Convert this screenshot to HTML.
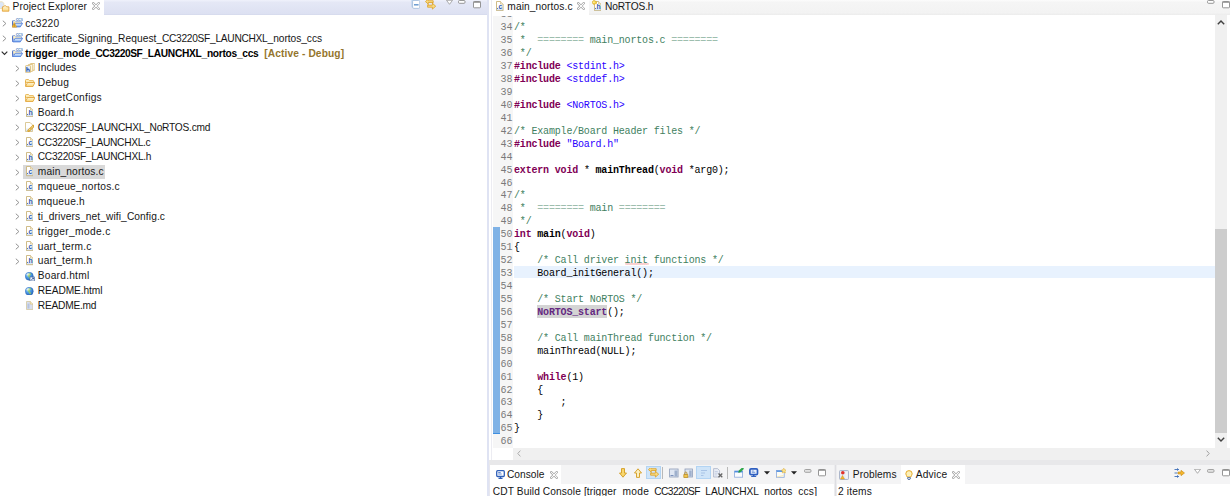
<!DOCTYPE html><html><head><meta charset="utf-8"><title>CCS</title><style>
*{box-sizing:border-box}
html,body{margin:0;padding:0}
body{width:1230px;height:496px;position:relative;overflow:hidden;background:#fff;font-family:"Liberation Sans", sans-serif;font-size:10px;color:#1a1a1a}
.abs,.ic,.tt,.sel,.ln{position:absolute}
.ic{line-height:0;display:block}
.ic svg{display:block}
.tt{white-space:pre;font-size:10.2px;color:#161616}
.tt.b{font-weight:bold;color:#000}
.tt.act{color:#94752c}
.sel{background:#d9d9d9}
#pe-head{left:104px;top:0;width:384px;height:14.6px;background:linear-gradient(#eef0fa 0,#eceffa 8%,#e5e8f6 12%,#dde1f2 90%,#d4d9ec 100%)}
#pe-border{left:487.4px;top:0;width:1.5px;height:496px;background:#dfe3f3}
#ed-left{left:491px;top:0;width:1px;height:465px;background:#ececf2}
#ed-tabs{left:492px;top:0;width:738px;height:14.6px;background:linear-gradient(#fbfbfb 0,#fafafa 8%,#f5f5f5 12%,#f3f3f3 85%,#ececec 100%)}
#ed-tab1{left:492px;top:0;width:97px;height:14.6px;background:#fff}
#editor{left:492px;top:15.7px;width:722.5px;height:431.9px;overflow:hidden;background:#fff}
#gut{left:.7px;top:0;width:20px;height:433px;background:#f6f6f6}
#bluebar{left:1px;top:211.4px;width:7px;height:206.6px;background:#7fb2e6;border-bottom:1px solid #3f8fe0}
.ln{left:0;width:740px;height:12.94px;line-height:12.94px;font-family:"Liberation Mono", monospace;font-size:10px;letter-spacing:-0.18px;white-space:pre;color:#000}
.ln .no{position:absolute;left:8.6px;top:0;color:#7a7a7a}
.ln .cd{position:absolute;left:22px;top:0;right:0}
.eq{opacity:.5}
.k{color:#7f0055}
.c{color:#3f7f5f}
.s{color:#2a00ff}
.fn{color:#642880}
#vsb{left:1214.5px;top:14.6px;width:12.6px;height:433px;background:#f0f0f0}
#vthumb{left:1214.5px;top:228.8px;width:12.6px;height:204.2px;background:#cdcdcd}
#hsb{left:512.6px;top:447.6px;width:717.4px;height:12.6px;background:#f0f0f0}
#sep{left:488.5px;top:460.2px;width:741.5px;height:5px;background:#e8e8ea}
#con-head{left:489px;top:465px;width:344.5px;height:18.7px;background:#f4f4f5}
#con-tab{left:489px;top:465px;width:72px;height:18.7px;background:#fff}
#adv-head{left:837px;top:465px;width:393px;height:18.7px;background:#f4f4f5}
#adv-tab{left:900.9px;top:465px;width:63.7px;height:18.7px;background:#fff}
#gap2{left:833.5px;top:465px;width:3.5px;height:31px;background:linear-gradient(90deg,#ececee 0,#ececee 40%,#dedee2 50%,#dedee2 75%,#ececee 80%)}
.lbl{position:absolute;white-space:pre}
.hl{position:absolute;background:#cfe4f8;border:1px solid #b3d4f3}
.vsep{position:absolute;width:1px;background:#b8b8b8}
</style></head><body>
<svg width="0" height="0" style="position:absolute"><defs><linearGradient id="gflap" x1="0" y1="0" x2="0" y2="1"><stop offset="0" stop-color="#e6f0fd"/><stop offset=".5" stop-color="#b4d2f8"/><stop offset="1" stop-color="#6c9cea"/></linearGradient><linearGradient id="gfold" x1="0" y1="0" x2="0" y2="1"><stop offset="0" stop-color="#fff7dc"/><stop offset="1" stop-color="#fad67a"/></linearGradient><linearGradient id="gpage" x1="0" y1="0" x2="0" y2="1"><stop offset="0" stop-color="#ffffff"/><stop offset=".55" stop-color="#ffffff"/><stop offset="1" stop-color="#c7dcf6"/></linearGradient><radialGradient id="gglobe" cx=".35" cy=".3" r=".8"><stop offset="0" stop-color="#d6ecff"/><stop offset=".35" stop-color="#58a6ee"/><stop offset="1" stop-color="#1f5fb4"/></radialGradient></defs></svg>
<div class="abs" id="pe-head"></div><div class="abs" id="pe-border"></div>
<span class="ic" style="left:0px;top:.5px"><svg width="10" height="11" viewBox="0 0 10 11"><path d="M-1 .8h3.400l1.400 1.500v5.200H-1z" fill="#dbe6f8" stroke="#ecdcae" stroke-width=".8"/><path d="M2.400 5.800h1l.9-1h1.500l.9 1h2.200v4.400H2.400z" fill="url(#gfold)" stroke="#df9c34" stroke-width=".8"/></svg></span>
<span class="tt" style="letter-spacing:0.126px;left:12.5px;top:0;height:13px;line-height:13px">Project Explorer</span>
<span class="ic" style="left:92px;top:1.900px"><svg width="8" height="8" viewBox="0 0 8 8"><path d="M1.300 1.300l5.400 5.400M6.700 1.300L1.300 6.700" stroke="#979797" stroke-width="2.300" stroke-linecap="square"/><path d="M1.300 1.300l5.400 5.400M6.700 1.300L1.300 6.700" stroke="#fff" stroke-width="1.100" stroke-linecap="square"/></svg></span>
<span class="ic" style="left:411px;top:-0.2px"><svg width="9.4" height="9.4" viewBox="0 0 9.4 9.4" ><rect x=".4" y="-.6" width="7" height="8" rx="1" fill="#b9d3ee"/><rect x="1.600" y=".4" width="7.200" height="8" rx="1.200" fill="#fff" stroke="#a6bfdc" stroke-width=".9"/><path d="M3 4.800h4.600" stroke="#6a9bd0" stroke-width="1.500"/></svg></span><span class="ic" style="left:424.6px;top:0px"><svg width="11.2" height="10" viewBox="0 0 11.2 10" ><path d="M.5 1.600L3.200-.9V.700h5V2.500h-5V4z" fill="#f9dc80" stroke="#dd9f22" stroke-width=".8" stroke-linejoin="round"/><path d="M10.700 6.200L7.400 3.300v1.900H2.600v2h4.800v1.900z" fill="#f9dc80" stroke="#dd9f22" stroke-width=".8" stroke-linejoin="round"/><path d="M7.700 2.500v1.200M3.100 5.200V3.900" stroke="#dd9f22" stroke-width=".9"/></svg></span><span class="ic" style="left:445.5px;top:0px"><svg width="7" height="5" viewBox="0 0 7 5" ><path d="M.5.300h6L3.500 4.300z" fill="#fff" stroke="#8e8e8e" stroke-width=".7"/></svg></span><span class="ic" style="left:458px;top:-0.2px"><svg width="8" height="4" viewBox="0 0 8 4" ><rect x=".5" y=".5" width="6.500" height="2.800" rx="1" fill="#fff" stroke="#8c8c8c" stroke-width=".9"/></svg></span><span class="ic" style="left:472.7px;top:0.7px"><svg width="8" height="8" viewBox="0 0 8 8" ><rect x=".5" y=".5" width="7" height="6.300" rx=".8" fill="#fff" stroke="#8a8a8a" stroke-width=".9"/><path d="M.5 1.200h7" stroke="#8a8a8a" stroke-width="1.100"/></svg></span>
<span class="ic" style="left:2.2px;top:20.45px"><svg width="5" height="7" viewBox="0 0 5 7"><path d="M.8.700L3.900 3.500.8 6.300" fill="none" stroke="#909090" stroke-width="1"/></svg></span>
<span class="ic" style="left:11.8px;top:17.30px"><svg width="11" height="10.5" viewBox="0 0 11 10.5"><text x="3.700" y="3.500" font-family="Liberation Sans, sans-serif" font-weight="bold" font-size="4.800" fill="#6a98cc" letter-spacing="-.25">ccs</text><path d="M.6 3.600h2.400l.9 1.100h5.600v2.600H.6z" fill="#fdf1c6" stroke="#6a92de" stroke-width=".7"/><path d="M.6 4.200v5.600" stroke="#3f63c0" stroke-width=".9"/><path d="M.9 9.900l2.300-3.600h7.400l-2.300 3.600z" fill="url(#gflap)" stroke="#4a78d8" stroke-width=".8"/><path d="M2.300 5.600L4.700 10.200H-.1z" fill="#f3b93a" stroke="#d39420" stroke-width=".5"/><path d="M2.300 7.200v1.500M2.300 9.200v.5" stroke="#8a5a00" stroke-width=".6"/></svg></span>
<span class="tt" style="letter-spacing:0.207px;left:25.2px;top:16.93px;height:14.84px;line-height:14.84px">cc3220</span>
<span class="ic" style="left:2.2px;top:35.29px"><svg width="5" height="7" viewBox="0 0 5 7"><path d="M.8.700L3.900 3.500.8 6.300" fill="none" stroke="#909090" stroke-width="1"/></svg></span>
<span class="ic" style="left:11.8px;top:32.14px"><svg width="11" height="10.5" viewBox="0 0 11 10.5"><text x="3.700" y="3.500" font-family="Liberation Sans, sans-serif" font-weight="bold" font-size="4.800" fill="#6a98cc" letter-spacing="-.25">ccs</text><path d="M.6 3.600h2.400l.9 1.100h5.600v2.600H.6z" fill="#fdf1c6" stroke="#6a92de" stroke-width=".7"/><path d="M.6 4.200v5.600" stroke="#3f63c0" stroke-width=".9"/><path d="M.9 9.900l2.300-3.600h7.400l-2.300 3.600z" fill="url(#gflap)" stroke="#4a78d8" stroke-width=".8"/></svg></span>
<span class="tt" style="left:25.2px;top:31.77px;height:14.84px;line-height:14.84px"><span style="letter-spacing:0.081px;">Certificate_Signing_Request</span><span style="letter-spacing:-0.282px;">_CC3220SF_LAUNCHXL</span><span style="letter-spacing:-0.040px;">_nortos_ccs</span></span>
<span class="ic" style="left:1.0000000000000002px;top:51.23px"><svg width="7" height="4.4" viewBox="0 0 7 4.4"><path d="M.7.700L3.500 3.500 6.300.700" fill="none" stroke="#2c2c2c" stroke-width="1.150"/></svg></span>
<span class="ic" style="left:11.8px;top:46.98px"><svg width="11" height="10.5" viewBox="0 0 11 10.5"><text x="3.700" y="3.500" font-family="Liberation Sans, sans-serif" font-weight="bold" font-size="4.800" fill="#6a98cc" letter-spacing="-.25">ccs</text><path d="M.6 3.600h2.400l.9 1.100h5.600v2.600H.6z" fill="#fdf1c6" stroke="#6a92de" stroke-width=".7"/><path d="M.6 4.200v5.600" stroke="#3f63c0" stroke-width=".9"/><path d="M.9 9.900l2.300-3.600h7.400l-2.300 3.600z" fill="url(#gflap)" stroke="#4a78d8" stroke-width=".8"/></svg></span>
<span class="tt b" style="left:25.2px;top:46.61px;height:14.84px;line-height:14.84px"><span style="letter-spacing:-0.009px;">trigger_mode</span><span style="letter-spacing:-0.440px;">_CC3220SF</span><span style="letter-spacing:-0.276px;">_LAUNCHXL_nortos_ccs</span></span>
<span class="tt b act" style="letter-spacing:0.118px;left:264.2px;top:46.61px;height:14.84px;line-height:14.84px">[Active - Debug]</span>
<span class="ic" style="left:14.8px;top:64.97px"><svg width="5" height="7" viewBox="0 0 5 7"><path d="M.8.700L3.900 3.500.8 6.300" fill="none" stroke="#909090" stroke-width="1"/></svg></span>
<span class="ic" style="left:24.5px;top:62.77px"><svg width="10.6" height="10.2" viewBox="0 0 10.6 10.2"><rect x="5.300" y=".5" width="4.600" height="6.800" rx=".8" fill="#fbf6e4" stroke="#d9b86a" stroke-width=".8"/><rect x="3.200" y="1.400" width="4.600" height="7" rx=".8" fill="#fbf6e4" stroke="#d9b86a" stroke-width=".8"/><rect x=".5" y="2.600" width="5" height="7.100" rx=".8" fill="#e8f0fb" stroke="#d9b86a" stroke-width=".8"/><path d="M1.900 4v4.800M1.900 7c.6-1.300 2.300-1.200 2.300.2v1.600" stroke="#2f5fb8" stroke-width="1.200" fill="none"/></svg></span>
<span class="tt" style="letter-spacing:0.081px;left:37.8px;top:61.45px;height:14.84px;line-height:14.84px">Includes</span>
<span class="ic" style="left:14.8px;top:79.81px"><svg width="5" height="7" viewBox="0 0 5 7"><path d="M.8.700L3.900 3.500.8 6.300" fill="none" stroke="#909090" stroke-width="1"/></svg></span>
<span class="ic" style="left:24.6px;top:79.31px"><svg width="10.4" height="8" viewBox="0 0 10.4 8"><path d="M.5 1.200c0-.5.300-.7.700-.7h2.300l1 1.100h3.600c.4 0 .6.300.6.600v1.200H.5z" fill="#fdf0c0" stroke="#e3a93c" stroke-width=".8"/><path d="M.5 2v5.200" stroke="#e3a93c" stroke-width=".8"/><path d="M.6 7.500l1.900-4h7.400l-1.900 4z" fill="url(#gfold)" stroke="#e0a030" stroke-width=".8"/></svg></span>
<span class="tt" style="letter-spacing:0.254px;left:37.8px;top:76.29px;height:14.84px;line-height:14.84px">Debug</span>
<span class="ic" style="left:14.8px;top:94.65px"><svg width="5" height="7" viewBox="0 0 5 7"><path d="M.8.700L3.900 3.500.8 6.300" fill="none" stroke="#909090" stroke-width="1"/></svg></span>
<span class="ic" style="left:24.6px;top:94.15px"><svg width="10.4" height="8" viewBox="0 0 10.4 8"><path d="M.5 1.200c0-.5.300-.7.700-.7h2.300l1 1.100h3.600c.4 0 .6.300.6.600v1.200H.5z" fill="#fdf0c0" stroke="#e3a93c" stroke-width=".8"/><path d="M.5 2v5.200" stroke="#e3a93c" stroke-width=".8"/><path d="M.6 7.500l1.900-4h7.400l-1.900 4z" fill="url(#gfold)" stroke="#e0a030" stroke-width=".8"/></svg></span>
<span class="tt" style="letter-spacing:0.277px;left:37.8px;top:91.13px;height:14.84px;line-height:14.84px">targetConfigs</span>
<span class="ic" style="left:14.8px;top:109.49px"><svg width="5" height="7" viewBox="0 0 5 7"><path d="M.8.700L3.900 3.500.8 6.300" fill="none" stroke="#909090" stroke-width="1"/></svg></span>
<span class="ic" style="left:25.9px;top:107.09px"><svg width="7.6" height="10.2" viewBox="0 0 7.6 10.2"><path d="M.5.500h4l2.600 2.600v6.600H.5z" fill="url(#gpage)" stroke="#cbb47a" stroke-width=".9"/><path d="M4.500.500v2.600h2.600" fill="#f6ecd0" stroke="#cbb47a" stroke-width=".6"/><rect x="1" y="7.100" width=".9" height=".9" fill="#2d5cb5"/><text x="4.500" y="8.100" font-family="Liberation Sans, sans-serif" font-weight="bold" font-size="6.800" fill="#2a58b0" text-anchor="middle">h</text></svg></span>
<span class="tt" style="letter-spacing:0.073px;left:37.8px;top:105.97px;height:14.84px;line-height:14.84px">Board.h</span>
<span class="ic" style="left:14.8px;top:124.33px"><svg width="5" height="7" viewBox="0 0 5 7"><path d="M.8.700L3.900 3.500.8 6.300" fill="none" stroke="#909090" stroke-width="1"/></svg></span>
<span class="ic" style="left:24.5px;top:122.13px"><svg width="9.6" height="10" viewBox="0 0 9.6 10"><path d="M.5.500h4.600l2.400 2.400v6.600H.5z" fill="url(#gpage)" stroke="#d8c48c" stroke-width=".9"/><path d="M3.600 8.700l4.800-4.600" stroke="#d9a532" stroke-width="2.600" stroke-linecap="round"/><path d="M4.300 8l1-1M6.700 5.700l1-1" stroke="#fff3c8" stroke-width=".9" stroke-linecap="round"/></svg></span>
<span class="tt" style="letter-spacing:-0.240px;left:37.8px;top:120.81px;height:14.84px;line-height:14.84px">CC3220SF_LAUNCHXL_NoRTOS.cmd</span>
<span class="ic" style="left:14.8px;top:139.17px"><svg width="5" height="7" viewBox="0 0 5 7"><path d="M.8.700L3.900 3.500.8 6.300" fill="none" stroke="#909090" stroke-width="1"/></svg></span>
<span class="ic" style="left:25.9px;top:136.77px"><svg width="7.6" height="10.2" viewBox="0 0 7.6 10.2"><path d="M.5.500h4l2.600 2.600v6.600H.5z" fill="url(#gpage)" stroke="#cbb47a" stroke-width=".9"/><path d="M4.500.500v2.600h2.600" fill="#f6ecd0" stroke="#cbb47a" stroke-width=".6"/><rect x="1" y="7.100" width=".9" height=".9" fill="#2d5cb5"/><text x="4.500" y="8.100" font-family="Liberation Sans, sans-serif" font-weight="bold" font-size="6.800" fill="#2a58b0" text-anchor="middle">c</text></svg></span>
<span class="tt" style="letter-spacing:-0.302px;left:37.8px;top:135.65px;height:14.84px;line-height:14.84px">CC3220SF_LAUNCHXL.c</span>
<span class="ic" style="left:14.8px;top:154.01px"><svg width="5" height="7" viewBox="0 0 5 7"><path d="M.8.700L3.900 3.500.8 6.300" fill="none" stroke="#909090" stroke-width="1"/></svg></span>
<span class="ic" style="left:25.9px;top:151.61px"><svg width="7.6" height="10.2" viewBox="0 0 7.6 10.2"><path d="M.5.500h4l2.600 2.600v6.600H.5z" fill="url(#gpage)" stroke="#cbb47a" stroke-width=".9"/><path d="M4.500.500v2.600h2.600" fill="#f6ecd0" stroke="#cbb47a" stroke-width=".6"/><rect x="1" y="7.100" width=".9" height=".9" fill="#2d5cb5"/><text x="4.500" y="8.100" font-family="Liberation Sans, sans-serif" font-weight="bold" font-size="6.800" fill="#2a58b0" text-anchor="middle">h</text></svg></span>
<span class="tt" style="letter-spacing:-0.291px;left:37.8px;top:150.49px;height:14.84px;line-height:14.84px">CC3220SF_LAUNCHXL.h</span>
<div class="sel" style="left:23px;top:164.53px;width:82.0px;height:14.700px"></div>
<span class="ic" style="left:14.8px;top:168.85px"><svg width="5" height="7" viewBox="0 0 5 7"><path d="M.8.700L3.900 3.500.8 6.300" fill="none" stroke="#909090" stroke-width="1"/></svg></span>
<span class="ic" style="left:25.9px;top:166.45px"><svg width="7.6" height="10.2" viewBox="0 0 7.6 10.2"><path d="M.5.500h4l2.600 2.600v6.600H.5z" fill="url(#gpage)" stroke="#cbb47a" stroke-width=".9"/><path d="M4.500.500v2.600h2.600" fill="#f6ecd0" stroke="#cbb47a" stroke-width=".6"/><rect x="1" y="7.100" width=".9" height=".9" fill="#2d5cb5"/><text x="4.500" y="8.100" font-family="Liberation Sans, sans-serif" font-weight="bold" font-size="6.800" fill="#2a58b0" text-anchor="middle">c</text></svg></span>
<span class="tt" style="letter-spacing:0.146px;left:37.8px;top:165.33px;height:14.84px;line-height:14.84px">main_nortos.c</span>
<span class="ic" style="left:14.8px;top:183.69px"><svg width="5" height="7" viewBox="0 0 5 7"><path d="M.8.700L3.900 3.500.8 6.300" fill="none" stroke="#909090" stroke-width="1"/></svg></span>
<span class="ic" style="left:25.9px;top:181.29px"><svg width="7.6" height="10.2" viewBox="0 0 7.6 10.2"><path d="M.5.500h4l2.600 2.600v6.600H.5z" fill="url(#gpage)" stroke="#cbb47a" stroke-width=".9"/><path d="M4.500.500v2.600h2.600" fill="#f6ecd0" stroke="#cbb47a" stroke-width=".6"/><rect x="1" y="7.100" width=".9" height=".9" fill="#2d5cb5"/><text x="4.500" y="8.100" font-family="Liberation Sans, sans-serif" font-weight="bold" font-size="6.800" fill="#2a58b0" text-anchor="middle">c</text></svg></span>
<span class="tt" style="letter-spacing:0.224px;left:37.8px;top:180.17px;height:14.84px;line-height:14.84px">mqueue_nortos.c</span>
<span class="ic" style="left:14.8px;top:198.53px"><svg width="5" height="7" viewBox="0 0 5 7"><path d="M.8.700L3.900 3.500.8 6.300" fill="none" stroke="#909090" stroke-width="1"/></svg></span>
<span class="ic" style="left:25.9px;top:196.13px"><svg width="7.6" height="10.2" viewBox="0 0 7.6 10.2"><path d="M.5.500h4l2.600 2.600v6.600H.5z" fill="url(#gpage)" stroke="#cbb47a" stroke-width=".9"/><path d="M4.500.500v2.600h2.600" fill="#f6ecd0" stroke="#cbb47a" stroke-width=".6"/><rect x="1" y="7.100" width=".9" height=".9" fill="#2d5cb5"/><text x="4.500" y="8.100" font-family="Liberation Sans, sans-serif" font-weight="bold" font-size="6.800" fill="#2a58b0" text-anchor="middle">h</text></svg></span>
<span class="tt" style="letter-spacing:0.236px;left:37.8px;top:195.01px;height:14.84px;line-height:14.84px">mqueue.h</span>
<span class="ic" style="left:14.8px;top:213.37px"><svg width="5" height="7" viewBox="0 0 5 7"><path d="M.8.700L3.900 3.500.8 6.300" fill="none" stroke="#909090" stroke-width="1"/></svg></span>
<span class="ic" style="left:25.9px;top:210.97px"><svg width="7.6" height="10.2" viewBox="0 0 7.6 10.2"><path d="M.5.500h4l2.600 2.600v6.600H.5z" fill="url(#gpage)" stroke="#cbb47a" stroke-width=".9"/><path d="M4.500.500v2.600h2.600" fill="#f6ecd0" stroke="#cbb47a" stroke-width=".6"/><rect x="1" y="7.100" width=".9" height=".9" fill="#2d5cb5"/><text x="4.500" y="8.100" font-family="Liberation Sans, sans-serif" font-weight="bold" font-size="6.800" fill="#2a58b0" text-anchor="middle">c</text></svg></span>
<span class="tt" style="letter-spacing:0.094px;left:37.8px;top:209.85px;height:14.84px;line-height:14.84px">ti_drivers_net_wifi_Config.c</span>
<span class="ic" style="left:14.8px;top:228.21px"><svg width="5" height="7" viewBox="0 0 5 7"><path d="M.8.700L3.900 3.500.8 6.300" fill="none" stroke="#909090" stroke-width="1"/></svg></span>
<span class="ic" style="left:25.9px;top:225.81px"><svg width="7.6" height="10.2" viewBox="0 0 7.6 10.2"><path d="M.5.500h4l2.600 2.600v6.600H.5z" fill="url(#gpage)" stroke="#cbb47a" stroke-width=".9"/><path d="M4.500.500v2.600h2.600" fill="#f6ecd0" stroke="#cbb47a" stroke-width=".6"/><rect x="1" y="7.100" width=".9" height=".9" fill="#2d5cb5"/><text x="4.500" y="8.100" font-family="Liberation Sans, sans-serif" font-weight="bold" font-size="6.800" fill="#2a58b0" text-anchor="middle">c</text></svg></span>
<span class="tt" style="letter-spacing:0.346px;left:37.8px;top:224.69px;height:14.84px;line-height:14.84px">trigger_mode.c</span>
<span class="ic" style="left:14.8px;top:243.05px"><svg width="5" height="7" viewBox="0 0 5 7"><path d="M.8.700L3.900 3.500.8 6.300" fill="none" stroke="#909090" stroke-width="1"/></svg></span>
<span class="ic" style="left:25.9px;top:240.65px"><svg width="7.6" height="10.2" viewBox="0 0 7.6 10.2"><path d="M.5.500h4l2.600 2.600v6.600H.5z" fill="url(#gpage)" stroke="#cbb47a" stroke-width=".9"/><path d="M4.500.500v2.600h2.600" fill="#f6ecd0" stroke="#cbb47a" stroke-width=".6"/><rect x="1" y="7.100" width=".9" height=".9" fill="#2d5cb5"/><text x="4.500" y="8.100" font-family="Liberation Sans, sans-serif" font-weight="bold" font-size="6.800" fill="#2a58b0" text-anchor="middle">c</text></svg></span>
<span class="tt" style="letter-spacing:0.197px;left:37.8px;top:239.53px;height:14.84px;line-height:14.84px">uart_term.c</span>
<span class="ic" style="left:14.8px;top:257.89px"><svg width="5" height="7" viewBox="0 0 5 7"><path d="M.8.700L3.900 3.500.8 6.300" fill="none" stroke="#909090" stroke-width="1"/></svg></span>
<span class="ic" style="left:25.9px;top:255.49px"><svg width="7.6" height="10.2" viewBox="0 0 7.6 10.2"><path d="M.5.500h4l2.600 2.600v6.600H.5z" fill="url(#gpage)" stroke="#cbb47a" stroke-width=".9"/><path d="M4.500.500v2.600h2.600" fill="#f6ecd0" stroke="#cbb47a" stroke-width=".6"/><rect x="1" y="7.100" width=".9" height=".9" fill="#2d5cb5"/><text x="4.500" y="8.100" font-family="Liberation Sans, sans-serif" font-weight="bold" font-size="6.800" fill="#2a58b0" text-anchor="middle">h</text></svg></span>
<span class="tt" style="letter-spacing:0.219px;left:37.8px;top:254.37px;height:14.84px;line-height:14.84px">uart_term.h</span>
<span class="ic" style="left:25.2px;top:271.68px"><svg width="10" height="9.4" viewBox="0 0 10 9.4"><circle cx="4.300" cy="4.300" r="4" fill="url(#gglobe)" stroke="#2f68b8" stroke-width=".5"/><path d="M3.600 1.600c1-.5 2.200-.2 2.600.5-.2.900-1 1.100-1.500 1.700-.5.700.3 1.300.9 1.600.6.400.3 1.400-.4 2-.6-.3-.8-1-1.100-1.700-.4-.8-1.400-1-1.500-1.900-.1-.9.300-1.700 1-2.200z" fill="#9ccf5a" opacity=".9"/><ellipse cx="3" cy="2.400" rx="1.700" ry="1.100" fill="#fff" opacity=".55"/><rect x="5" y="5" width="4.600" height="4" fill="#f4f7fc" stroke="#4c6a9c" stroke-width=".7"/><path d="M6.200 8l2.200-1.900M7.200 6h1.300v1.300" stroke="#234a98" stroke-width=".8" fill="none"/></svg></span>
<span class="tt" style="letter-spacing:0.233px;left:37.8px;top:269.21px;height:14.84px;line-height:14.84px">Board.html</span>
<span class="ic" style="left:25.2px;top:286.57px"><svg width="8.6" height="8.6" viewBox="0 0 8.6 8.6"><circle cx="4.300" cy="4.300" r="4" fill="url(#gglobe)" stroke="#2f68b8" stroke-width=".5"/><path d="M3.600 1.600c1-.5 2.200-.2 2.600.5-.2.900-1 1.100-1.500 1.700-.5.700.3 1.300.9 1.600.6.400.3 1.400-.4 2-.6-.3-.8-1-1.100-1.700-.4-.8-1.400-1-1.500-1.900-.1-.9.300-1.700 1-2.200z" fill="#9ccf5a" opacity=".9"/><ellipse cx="3" cy="2.400" rx="1.700" ry="1.100" fill="#fff" opacity=".55"/></svg></span>
<span class="tt" style="letter-spacing:-0.097px;left:37.8px;top:284.05px;height:14.84px;line-height:14.84px">README.html</span>
<span class="ic" style="left:26px;top:301.21px"><svg width="7.4" height="9" viewBox="0 0 7.4 9"><path d="M.5.500h3.800l2.600 2.600v5.400H.5z" fill="#d8dff0" stroke="#d2c69e" stroke-width=".8"/><path d="M4.300.500v2.600h2.600" fill="#f7ecc8" stroke="#dcc070" stroke-width=".6"/><path d="M1.500 2.600h2v4.900h-2z" fill="#b6c3de"/></svg></span>
<span class="tt" style="letter-spacing:-0.231px;left:37.8px;top:298.89px;height:14.84px;line-height:14.84px">README.md</span>
<div class="abs" id="ed-left"></div><div class="abs" id="ed-tabs"></div><div class="abs" id="ed-tab1"></div>
<span class="ic" style="left:496px;top:.9px"><svg width="7.6" height="10.2" viewBox="0 0 7.6 10.2"><path d="M.5.500h4l2.600 2.600v6.600H.5z" fill="url(#gpage)" stroke="#cbb47a" stroke-width=".9"/><path d="M4.500.500v2.600h2.600" fill="#f6ecd0" stroke="#cbb47a" stroke-width=".6"/><rect x="1" y="7.100" width=".9" height=".9" fill="#2d5cb5"/><text x="4.500" y="8.100" font-family="Liberation Sans, sans-serif" font-weight="bold" font-size="6.800" fill="#2a58b0" text-anchor="middle">c</text></svg></span>
<span class="tt" style="letter-spacing:0.100px;left:507.3px;top:0;height:13.4px;line-height:13.4px">main_nortos.c</span>
<span class="ic" style="left:577.400px;top:1.900px"><svg width="8" height="8" viewBox="0 0 8 8"><path d="M1.300 1.300l5.400 5.400M6.700 1.300L1.300 6.700" stroke="#979797" stroke-width="2.300" stroke-linecap="square"/><path d="M1.300 1.300l5.400 5.400M6.700 1.300L1.300 6.700" stroke="#fff" stroke-width="1.100" stroke-linecap="square"/></svg></span>
<span class="ic" style="left:593.600px;top:.9px"><svg width="7.6" height="10.2" viewBox="0 0 7.6 10.2"><path d="M.5.500h4l2.600 2.600v6.600H.5z" fill="url(#gpage)" stroke="#cbb47a" stroke-width=".9"/><path d="M4.500.500v2.600h2.600" fill="#f6ecd0" stroke="#cbb47a" stroke-width=".6"/><rect x="1" y="7.100" width=".9" height=".9" fill="#2d5cb5"/><text x="4.500" y="8.100" font-family="Liberation Sans, sans-serif" font-weight="bold" font-size="6.800" fill="#2a58b0" text-anchor="middle">h</text></svg></span><span class="ic" style="left:592px;top:.4px"><svg width="5.400" height="5" viewBox="0 0 5.400 5"><path d="M.4 2.200c0-1.500 1.400-2 2.400-1.500l2 1.400c.5.500.2 1.300-.5 1.300l-2 .9C1.200 4.600.4 3.600.4 2.200z" fill="#f3d24a" stroke="#d9a520" stroke-width=".6"/><circle cx="1.900" cy="2.300" r=".7" fill="#fff6c0"/></svg></span>
<span class="tt" style="letter-spacing:-0.132px;left:605px;top:0;height:13.4px;line-height:13.4px">NoRTOS.h</span>
<div class="abs" id="editor"><div class="abs" id="gut"></div><div class="abs" id="bluebar"></div><div id="lines" style="position:absolute;left:0;top:-15.7px"><div class="abs" style="left:22px;top:266.46px;width:720px;height:12px;background:#e8f2fe"></div>
<div class="abs" style="left:45.2px;top:305.18px;width:69.6px;height:12.4px;background:#d4d4d4"></div>
<span class="ic" style="left:133.4px;top:263.42px"><svg width="23.6" height="2.2" viewBox="0 0 23.6 2.2"><path d="M0 1.6L1 .4L2 1.600L3 .4L4 1.600L5 .4L6 1.600L7 .4L8 1.600L9 .4L10 1.600L11 .4L12 1.600L13 .4L14 1.600L15 .4L16 1.600L17 .4L18 1.600L19 .4L20 1.600L21 .4L22 1.600L23 .4L24 1.600" fill="none" stroke="#f07070" stroke-width=".6"/></svg></span>
<div class="ln" style="top:9.29px"><span class="no">33</span><span class="cd"></span></div>
<div class="ln" style="top:22.23px"><span class="no">34</span><span class="cd"><span class="c">/*</span></span></div>
<div class="ln" style="top:35.17px"><span class="no">35</span><span class="cd"><span class="c"> *  <span class="eq">========</span> main_nortos.c <span class="eq">========</span></span></span></div>
<div class="ln" style="top:48.11px"><span class="no">36</span><span class="cd"><span class="c"> */</span></span></div>
<div class="ln" style="top:61.05px"><span class="no">37</span><span class="cd"><b class="k">#include</b> <span class="s">&lt;stdint.h&gt;</span></span></div>
<div class="ln" style="top:73.99px"><span class="no">38</span><span class="cd"><b class="k">#include</b> <span class="s">&lt;stddef.h&gt;</span></span></div>
<div class="ln" style="top:86.93px"><span class="no">39</span><span class="cd"></span></div>
<div class="ln" style="top:99.87px"><span class="no">40</span><span class="cd"><b class="k">#include</b> <span class="s">&lt;NoRTOS.h&gt;</span></span></div>
<div class="ln" style="top:112.81px"><span class="no">41</span><span class="cd"></span></div>
<div class="ln" style="top:125.75px"><span class="no">42</span><span class="cd"><span class="c">/* Example/Board Header files */</span></span></div>
<div class="ln" style="top:138.69px"><span class="no">43</span><span class="cd"><b class="k">#include</b> <span class="s">"Board.h"</span></span></div>
<div class="ln" style="top:151.63px"><span class="no">44</span><span class="cd"></span></div>
<div class="ln" style="top:164.57px"><span class="no">45</span><span class="cd"><b class="k">extern</b> <b class="k">void</b> * <b>mainThread</b>(<b class="k">void</b> *arg0);</span></div>
<div class="ln" style="top:177.51px"><span class="no">46</span><span class="cd"></span></div>
<div class="ln" style="top:190.45px"><span class="no">47</span><span class="cd"><span class="c">/*</span></span></div>
<div class="ln" style="top:203.39px"><span class="no">48</span><span class="cd"><span class="c"> *  <span class="eq">========</span> main <span class="eq">========</span></span></span></div>
<div class="ln" style="top:216.33px"><span class="no">49</span><span class="cd"><span class="c"> */</span></span></div>
<div class="ln" style="top:229.27px"><span class="no">50</span><span class="cd"><b class="k">int</b> <b>main</b>(<b class="k">void</b>)</span></div>
<div class="ln" style="top:242.21px"><span class="no">51</span><span class="cd">{</span></div>
<div class="ln" style="top:255.15px"><span class="no">52</span><span class="cd">    <span class="c">/* Call driver init functions */</span></span></div>
<div class="ln cur" style="top:268.09px"><span class="no">53</span><span class="cd">    Board_initGeneral();</span></div>
<div class="ln" style="top:281.03px"><span class="no">54</span><span class="cd"></span></div>
<div class="ln" style="top:293.97px"><span class="no">55</span><span class="cd">    <span class="c">/* Start NoRTOS */</span></span></div>
<div class="ln" style="top:306.91px"><span class="no">56</span><span class="cd">    <b class="fn">NoRTOS_start</b>();</span></div>
<div class="ln" style="top:319.85px"><span class="no">57</span><span class="cd"></span></div>
<div class="ln" style="top:332.79px"><span class="no">58</span><span class="cd">    <span class="c">/* Call mainThread function */</span></span></div>
<div class="ln" style="top:345.73px"><span class="no">59</span><span class="cd">    mainThread(NULL);</span></div>
<div class="ln" style="top:358.67px"><span class="no">60</span><span class="cd"></span></div>
<div class="ln" style="top:371.61px"><span class="no">61</span><span class="cd">    <b class="k">while</b>(1)</span></div>
<div class="ln" style="top:384.55px"><span class="no">62</span><span class="cd">    {</span></div>
<div class="ln" style="top:397.49px"><span class="no">63</span><span class="cd">        ;</span></div>
<div class="ln" style="top:410.43px"><span class="no">64</span><span class="cd">    }</span></div>
<div class="ln" style="top:423.37px"><span class="no">65</span><span class="cd">}</span></div>
<div class="ln" style="top:436.31px"><span class="no">66</span><span class="cd"></span></div></div></div>
<div class="abs" id="vsb"></div><div class="abs" id="vthumb"></div><div class="abs" id="hsb"></div><div class="abs" id="sep"></div>
<span class="ic" style="left:1207px;top:-0.2px"><svg width="8" height="4" viewBox="0 0 8 4" ><rect x=".5" y=".5" width="6.500" height="2.800" rx="1" fill="#fff" stroke="#8c8c8c" stroke-width=".9"/></svg></span><span class="ic" style="left:1222px;top:0.7px"><svg width="8" height="8" viewBox="0 0 8 8" ><rect x=".5" y=".5" width="7" height="6.300" rx=".8" fill="#fff" stroke="#8a8a8a" stroke-width=".9"/><path d="M.5 1.200h7" stroke="#8a8a8a" stroke-width="1.100"/></svg></span><span class="ic" style="left:1216.9px;top:19.8px"><svg width="8" height="5" viewBox="0 0 8 5" ><path d="M.8 4.300L4 1l3.200 3.300" fill="none" stroke="#404040" stroke-width="1.400"/></svg></span><span class="ic" style="left:1216.9px;top:437.4px"><svg width="8" height="5" viewBox="0 0 8 5" ><path d="M.8.700L4 4l3.200-3.300" fill="none" stroke="#404040" stroke-width="1.400"/></svg></span><span class="ic" style="left:517.3px;top:449.9px"><svg width="4" height="7" viewBox="0 0 4 7" ><path d="M3.400.600L.8 3.500l2.600 2.900" fill="none" stroke="#ababab" stroke-width="1"/></svg></span><span class="ic" style="left:1205.5px;top:449.9px"><svg width="4" height="7" viewBox="0 0 4 7" ><path d="M.6.600l2.600 2.900L.6 6.400" fill="none" stroke="#a0a0a0" stroke-width="1"/></svg></span><div class="abs" id="con-head"></div><div class="abs" id="con-tab"></div><div class="abs" id="adv-head"></div><div class="abs" id="adv-tab"></div><div class="abs" id="gap2"></div><div class="abs" style="left:488.5px;top:465px;width:1px;height:31px;background:#e6e6ee"></div><span class="ic" style="left:495.5px;top:470.3px"><svg width="9" height="9" viewBox="0 0 9 9" ><rect x=".7" y=".7" width="7.600" height="5.800" rx="1" fill="#fff" stroke="#2f5fb8" stroke-width="1.300"/><path d="M2.200 2.500h2.500M2.200 4h3.500" stroke="#3f6fc8" stroke-width=".8"/><path d="M2.500 8.300h4M4.500 6.500v1.800" stroke="#2f5fb8" stroke-width="1.200"/></svg></span><span class="tt" style="letter-spacing:-0.013px;left:507px;top:466.400px;height:18px;line-height:18px">Console</span><span class="ic" style="left:549.5px;top:470.8px"><svg width="8" height="8" viewBox="0 0 8 8" ><path d="M1.300 1.300l5.400 5.400M6.700 1.300L1.300 6.700" stroke="#979797" stroke-width="2.300" stroke-linecap="square"/><path d="M1.300 1.300l5.400 5.400M6.700 1.300L1.300 6.700" stroke="#fff" stroke-width="1.100" stroke-linecap="square"/></svg></span><span class="ic" style="left:619.3px;top:467.8px"><svg width="8" height="10" viewBox="0 0 8 10" ><path d="M2.500.600h3v4.400h2L4 9.200.5 5h2z" fill="#f9d76e" stroke="#d39b1f" stroke-width=".9"/></svg></span><span class="ic" style="left:634.2px;top:467.8px"><svg width="8" height="10" viewBox="0 0 8 10" ><path d="M2.500 9.400h3V5h2L4 .8.500 5h2z" fill="#fdf0c0" stroke="#d39b1f" stroke-width=".9"/></svg></span><div class="hl" style="left:646px;top:465.6px;width:15px;height:13.800px"></div><span class="ic" style="left:648.3px;top:467.8px"><svg width="11.2" height="10" viewBox="0 0 11.2 10" ><path d="M.5 1.600L3.200-.9V.700h5V2.500h-5V4z" fill="#f9dc80" stroke="#dd9f22" stroke-width=".8" stroke-linejoin="round"/><path d="M10.700 6.200L7.400 3.300v1.900H2.600v2h4.800v1.900z" fill="#f9dc80" stroke="#dd9f22" stroke-width=".8" stroke-linejoin="round"/><path d="M7.700 2.500v1.200M3.100 5.200V3.900" stroke="#dd9f22" stroke-width=".9"/></svg></span><div class="vsep" style="left:661.900px;top:467px;height:11.500px"></div><span class="ic" style="left:668.8px;top:467.8px"><svg width="10" height="10" viewBox="0 0 10 10" ><rect x=".6" y="1" width="8.500" height="8" fill="#dfe6f2" stroke="#8f9db8" stroke-width=".8"/><rect x="5.500" y="2.500" width="3" height="6" fill="#9fb0cc"/><path d="M1.500 7.500h3" stroke="#6f87b5" stroke-width=".9"/></svg></span><span class="ic" style="left:683.2px;top:467.8px"><svg width="10" height="10" viewBox="0 0 10 10" ><rect x="2" y="1" width="7.500" height="8" fill="#dfe6f2" stroke="#8f9db8" stroke-width=".8"/><rect x="6.200" y="2.500" width="2.500" height="6" fill="#9fb0cc"/><path d="M.8 9.500V6.500h4v3z" fill="#f3c64e" stroke="#b98a1c" stroke-width=".7"/><path d="M1.700 6.500V5c0-1.300 2.200-1.300 2.200 0v1.500" fill="none" stroke="#b98a1c" stroke-width=".8"/></svg></span><div class="hl" style="left:696px;top:465.6px;width:15px;height:13.800px"></div><span class="ic" style="left:699.5px;top:468.5px"><svg width="8" height="8" viewBox="0 0 8 8" ><path d="M1 1.500h6M1 4h4M1 6.500h2.500" stroke="#a9c4e6" stroke-width="1.100"/></svg></span><span class="ic" style="left:713px;top:467.8px"><svg width="10" height="10" viewBox="0 0 10 10" ><path d="M.6.600h4l2 2v6.400h-6z" fill="#e9edf5" stroke="#a9b3c7" stroke-width=".8"/><path d="M1.800 3.500h3M1.800 5.200h3M1.800 6.900h2" stroke="#b9c4dc" stroke-width=".7"/><path d="M5.500 5.500l3.800 3.800M9.300 5.500L5.500 9.300" stroke="#666" stroke-width="1.300"/></svg></span><div class="vsep" style="left:727.2px;top:467px;height:11.500px"></div><span class="ic" style="left:733.5px;top:467.6px"><svg width="10" height="10" viewBox="0 0 10 10" ><rect x=".6" y="3" width="8" height="6.200" fill="#fbfcff" stroke="#8aa8dc" stroke-width=".8"/><path d="M.6 3.700h8" stroke="#4f8fe0" stroke-width="1.500"/><path d="M5.600 3.400l3-2.800" stroke="#2fa84a" stroke-width="2.200" stroke-linecap="round"/><path d="M4.600 4.600l1.300-1.300" stroke="#1f7a34" stroke-width=".8"/></svg></span><span class="ic" style="left:749.2px;top:467.8px"><svg width="9.4" height="9.4" viewBox="0 0 9.4 9.4" ><rect x=".9" y=".9" width="7.600" height="5.800" rx="1.200" fill="#eaf1fc" stroke="#2f5fc0" stroke-width="1.700"/><path d="M2.800 3h2M2.800 4.300h3.400" stroke="#3f6fc8" stroke-width=".7"/><path d="M2.200 8.700h5" stroke="#2f5fc0" stroke-width="1.300"/><path d="M4.700 7v1.400" stroke="#2f5fc0" stroke-width="1.600"/></svg></span><span class="ic" style="left:763.8px;top:471px"><svg width="6" height="4" viewBox="0 0 6 4" ><path d="M0 .3h6L3 3.600z" fill="#222"/></svg></span><span class="ic" style="left:775.8px;top:467.6px"><svg width="10.4" height="10" viewBox="0 0 10.4 10" ><rect x=".6" y="2.500" width="7.600" height="6.800" fill="#fdfcf4" stroke="#8aa8dc" stroke-width=".8"/><path d="M.6 3.200h7.600" stroke="#4f8fe0" stroke-width="1.400"/><path d="M1 9l6.500-1.500" stroke="#f3e2a8" stroke-width=".8"/><path d="M7.800.2l.9 1.500 1.600.4-1.200 1.200.3 1.700-1.600-.8-1.500.8.300-1.700L5.400 2.100l1.600-.4z" fill="#fbe38a" stroke="#d9a52c" stroke-width=".5"/></svg></span><span class="ic" style="left:791.2px;top:471px"><svg width="6" height="4" viewBox="0 0 6 4" ><path d="M0 .3h6L3 3.600z" fill="#222"/></svg></span><span class="ic" style="left:803.5px;top:468.8px"><svg width="8" height="4" viewBox="0 0 8 4" ><rect x=".5" y=".5" width="6.500" height="2.800" rx="1" fill="#e2e2e2" stroke="#9a9a9a" stroke-width=".9"/></svg></span><span class="ic" style="left:818.3px;top:469.3px"><svg width="8" height="8" viewBox="0 0 8 8" ><rect x=".5" y=".5" width="7" height="6.300" rx=".8" fill="#fff" stroke="#8a8a8a" stroke-width=".9"/><path d="M.5 1.200h7" stroke="#8a8a8a" stroke-width="1.100"/></svg></span><span class="tt" style="left:492.800px;top:483.500px;height:15px;line-height:15px"><span style="letter-spacing:0.101px;">CDT Build Console [trigger</span><span style="letter-spacing:0.349px;">_mode</span><span style="letter-spacing:-0.618px;">_CC3220SF</span><span style="letter-spacing:-0.126px;">_LAUNCHXL</span><span style="letter-spacing:-0.055px;">_nortos</span><span style="letter-spacing:0.224px;">_ccs]</span></span><span class="ic" style="left:839px;top:470px"><svg width="10" height="10" viewBox="0 0 10 10" ><rect x=".5" y=".5" width="9" height="9" rx="1" fill="#e6ebf5" stroke="#9aa7c0" stroke-width=".8"/><circle cx="3.800" cy="2.800" r="1.800" fill="#e0302a"/><path d="M1.500 9l2-3.600L5.500 9z" fill="#f3b52e" stroke="#c98a10" stroke-width=".4"/><path d="M6.500 3h2M6.500 5h2M6.500 7h2" stroke="#fff" stroke-width=".9"/></svg></span><span class="tt" style="letter-spacing:0.096px;left:852.8px;top:466.400px;height:18px;line-height:18px">Problems</span><span class="ic" style="left:904.6px;top:470px"><svg width="8" height="10" viewBox="0 0 8 10" ><path d="M4 .6a3.200 3.200 0 0 1 3.200 3.200c0 1.400-1.200 2-1.400 3.200H2.200C2 5.800.8 5.200.8 3.800A3.200 3.200 0 0 1 4 .6z" fill="#fdf0b8" stroke="#e0a21c" stroke-width=".9"/><path d="M2.600 7.600h2.800v1.200c0 1-2.800 1-2.800 0z" fill="#dfe6f2" stroke="#3f5f98" stroke-width=".8"/></svg></span><span class="tt" style="letter-spacing:0.170px;left:915.8px;top:466.400px;height:18px;line-height:18px">Advice</span><span class="ic" style="left:952.3px;top:470.8px"><svg width="8" height="8" viewBox="0 0 8 8" ><path d="M1.300 1.300l5.400 5.400M6.700 1.300L1.300 6.700" stroke="#979797" stroke-width="2.300" stroke-linecap="square"/><path d="M1.300 1.300l5.400 5.400M6.700 1.300L1.300 6.700" stroke="#fff" stroke-width="1.100" stroke-linecap="square"/></svg></span><span class="ic" style="left:1173.8px;top:468.3px"><svg width="11" height="10" viewBox="0 0 11 10" ><path d="M.5 1.500h4.500M.5 5h3M.5 8.500h4.500" stroke="#3f6fb8" stroke-width=".9"/><path d="M3.500.3v2.400M3.500 7.300v2.400" stroke="#3f6fb8" stroke-width=".9"/><path d="M4 4h3V2.300L10.500 5 7 7.700V6H4z" fill="#f3b52e" stroke="#c98a10" stroke-width=".6"/></svg></span><span class="ic" style="left:1194.2px;top:469.2px"><svg width="7" height="5" viewBox="0 0 7 5" ><path d="M.5.300h6L3.500 4.300z" fill="#fff" stroke="#8e8e8e" stroke-width=".7"/></svg></span><span class="ic" style="left:1206.8px;top:469px"><svg width="8" height="4" viewBox="0 0 8 4" ><rect x=".5" y=".5" width="6.500" height="2.800" rx="1" fill="#e2e2e2" stroke="#9a9a9a" stroke-width=".9"/></svg></span><span class="ic" style="left:1222px;top:469.3px"><svg width="8" height="8" viewBox="0 0 8 8" ><rect x=".5" y=".5" width="7" height="6.300" rx=".8" fill="#fff" stroke="#8a8a8a" stroke-width=".9"/><path d="M.5 1.200h7" stroke="#8a8a8a" stroke-width="1.100"/></svg></span><span class="tt" style="letter-spacing:0.151px;left:838px;top:483.500px;height:15px;line-height:15px">2 items</span>
</body></html>
